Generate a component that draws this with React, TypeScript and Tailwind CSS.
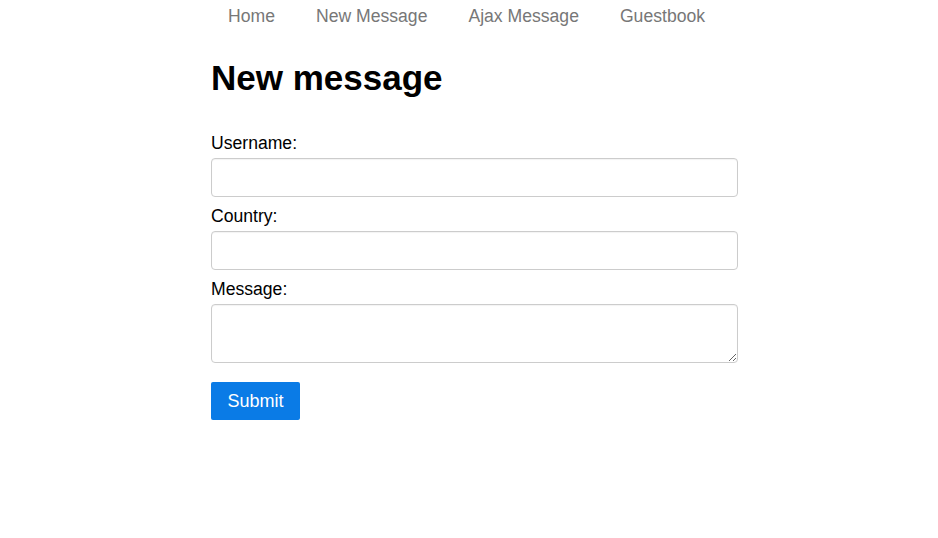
import React from 'react';

const navItems = ['Home', 'New Message', 'Ajax Message', 'Guestbook'];

const fields = [
  { label: 'Username:', kind: 'input' },
  { label: 'Country:', kind: 'input' },
  { label: 'Message:', kind: 'textarea' },
];

const App: React.FC = () => {
  return (
    <div className="min-h-[538px] bg-white text-black" style={{ fontFamily: '"Liberation Sans", Arial, sans-serif' }}>
      <nav className="flex h-[32px] pl-[207.5px]">
        {navItems.map(item => (
          <a key={item} href="#" className="px-[20.5px] text-[17.6px] leading-[32px] text-[#777777]">
            {item}
          </a>
        ))}
      </nav>

      <div className="ml-[211px] w-[527px]">
        <h1 className="mt-[26px] mb-[26px] text-[35px] font-bold leading-[40px]">New message</h1>

        <form className="flex flex-col" onSubmit={e => e.preventDefault()}>
          {fields.map(f => (
            <div key={f.label} className="flex flex-col">
              <label className="pt-[8px] pb-[4px] text-[17.6px] leading-[22px]">{f.label}</label>
              {f.kind === 'input' ? (
                <input
                  type="text"
                  className="h-[39px] w-full rounded-[4px] border border-[#cccccc] px-3 text-[16px] shadow-[inset_0_1px_1px_rgba(0,0,0,0.05)]"
                />
              ) : (
                <textarea className="block h-[59px] w-full rounded-[4px] border border-[#cccccc] px-3 text-[16px] shadow-[inset_0_1px_1px_rgba(0,0,0,0.05)]" />
              )}
            </div>
          ))}

          <button
            type="submit"
            className="mt-[19px] h-[38px] w-[89px] rounded-[2px] bg-[#0a7be6] text-center text-[18px] text-white"
          >
            Submit
          </button>
        </form>
      </div>
    </div>
  );
};

export default App;
